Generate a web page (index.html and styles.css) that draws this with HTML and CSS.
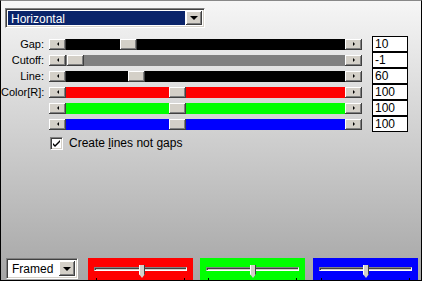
FILE: index.html
```html
<!DOCTYPE html>
<html lang="en">
<head>
    <meta charset="UTF-8">
    <title>Line Effect</title>
    <link rel="stylesheet" href="styles.css">
</head>
<body>
    <div class="window">
        <div class="top">
            <div class="select wide">
                <span class="select-value selected">Horizontal</span>
                <span class="select-btn"><i class="arrow-down"></i></span>
            </div>
        </div>

        <div class="rows">
            <div class="row">
                <span class="label">Gap:</span>
                <div class="slider">
                    <span class="sbtn"><i class="arrow-left"></i></span>
                    <div class="track black"><span class="thumb" style="left: 54px"></span></div>
                    <span class="sbtn"><i class="arrow-right"></i></span>
                </div>
                <span class="value">10</span>
            </div>
            <div class="row">
                <span class="label">Cutoff:</span>
                <div class="slider">
                    <span class="sbtn"><i class="arrow-left"></i></span>
                    <div class="track grey"><span class="thumb" style="left: 1px"></span></div>
                    <span class="sbtn"><i class="arrow-right"></i></span>
                </div>
                <span class="value">-1</span>
            </div>
            <div class="row">
                <span class="label">Line:</span>
                <div class="slider">
                    <span class="sbtn"><i class="arrow-left"></i></span>
                    <div class="track black"><span class="thumb" style="left: 62px"></span></div>
                    <span class="sbtn"><i class="arrow-right"></i></span>
                </div>
                <span class="value">60</span>
            </div>
            <div class="row">
                <span class="label">Color[R]:</span>
                <div class="slider">
                    <span class="sbtn"><i class="arrow-left"></i></span>
                    <div class="track red"><span class="thumb" style="left: 103px"></span></div>
                    <span class="sbtn"><i class="arrow-right"></i></span>
                </div>
                <span class="value">100</span>
            </div>
            <div class="row">
                <span class="label"></span>
                <div class="slider">
                    <span class="sbtn"><i class="arrow-left"></i></span>
                    <div class="track green"><span class="thumb" style="left: 103px"></span></div>
                    <span class="sbtn"><i class="arrow-right"></i></span>
                </div>
                <span class="value">100</span>
            </div>
            <div class="row">
                <span class="label"></span>
                <div class="slider">
                    <span class="sbtn"><i class="arrow-left"></i></span>
                    <div class="track blue"><span class="thumb" style="left: 103px"></span></div>
                    <span class="sbtn"><i class="arrow-right"></i></span>
                </div>
                <span class="value">100</span>
            </div>
        </div>

        <label class="check-row">
            <span class="checkbox">
                <svg width="9" height="9" viewBox="0 0 9 9"><path d="M1 4 L3 6 L8 1 L8 3 L3 8 L1 6 Z" fill="#000"/></svg>
            </span>
            <span>Create <u>l</u>ines not gaps</span>
        </label>

        <div class="bottom">
            <div class="select small">
                <span class="select-value">Framed</span>
                <span class="select-btn"><i class="arrow-down"></i></span>
            </div>
            <div class="panel red">
                <div class="hslider">
                    <span class="hline"></span>
                    <span class="hthumb" style="left: 45px"></span>
                    <span class="tick tick-l"></span>
                    <span class="tick tick-r"></span>
                </div>
            </div>
            <div class="panel green">
                <div class="hslider">
                    <span class="hline"></span>
                    <span class="hthumb" style="left: 44px"></span>
                    <span class="tick tick-l"></span>
                    <span class="tick tick-r"></span>
                </div>
            </div>
            <div class="panel blue">
                <div class="hslider">
                    <span class="hline"></span>
                    <span class="hthumb" style="left: 44px"></span>
                    <span class="tick tick-l"></span>
                    <span class="tick tick-r"></span>
                </div>
            </div>
        </div>
    </div>
</body>
</html>
```

FILE: styles.css
```css
:root {
    --face: #d4d0c8;
    --shadow: #808080;
    --dark: #404040;
}

* {
    margin: 0;
    padding: 0;
    box-sizing: border-box;
    font-family: 'Liberation Sans', Arial, sans-serif;
}

body {
    background: #a8a8a8;
}

.window {
    width: 422px;
    height: 281px;
    border: 1px solid #000;
    border-top-color: #888;
    background: linear-gradient(#f6f6f6, #a6a6a6);
    display: flex;
    flex-direction: column;
    font-size: 11px;
    color: #000;
}

.top {
    padding: 7px 0 0 4px;
}

.select {
    height: 20px;
    display: flex;
    background: #fff;
    border: 1px solid;
    border-color: var(--shadow) #fff #fff var(--shadow);
    box-shadow: inset 1px 1px var(--dark), inset -1px -1px var(--face);
    padding: 2px;
}

.select.wide {
    width: 200px;
}

.select.small {
    width: 72px;
    height: 21px;
}

.select-value {
    flex: 1;
    font-size: 12px;
    line-height: 16px;
    padding-left: 3px;
}

.select-value.selected {
    background: #0a246a;
    color: #fff;
    margin-right: 1px;
}

.select-btn,
.sbtn {
    background: var(--face);
    box-shadow: inset -1px -1px var(--dark), inset 1px 1px #fff, inset -2px -2px var(--shadow);
    display: flex;
    align-items: center;
    justify-content: center;
}

.select-btn {
    width: 16px;
}

.arrow-down {
    border-left: 4px solid transparent;
    border-right: 4px solid transparent;
    border-top: 4px solid #000;
}

.rows {
    margin-top: 8px;
}

.row {
    display: flex;
    align-items: center;
    height: 16px;
}

.label {
    width: 43px;
    text-align: right;
    font-size: 11px;
    line-height: 14px;
    margin-right: 5px;
}

.slider {
    width: 313px;
    height: 11px;
    display: flex;
}

.sbtn {
    width: 17px;
    height: 11px;
}

.arrow-left {
    border-top: 2px solid transparent;
    border-bottom: 2px solid transparent;
    border-right: 2px solid #000;
}

.arrow-right {
    border-top: 2px solid transparent;
    border-bottom: 2px solid transparent;
    border-left: 2px solid #000;
}

.track {
    flex: 1;
    position: relative;
}

.track.black { background: #000; }
.track.grey { background: #808080; }
.track.red { background: #ff0000; }
.track.green { background: #00ff00; }
.track.blue { background: #0000ff; }

.thumb {
    position: absolute;
    top: 0;
    width: 17px;
    height: 11px;
    background: var(--face);
    box-shadow: inset -1px -1px var(--dark), inset 1px 1px #fff, inset -2px -2px var(--shadow);
}

.value {
    width: 36px;
    height: 16px;
    margin-left: 10px;
    background: #fff;
    border: 1px solid #000;
    font-size: 12px;
    line-height: 14px;
    padding-left: 2px;
}

.check-row {
    display: flex;
    align-items: center;
    gap: 6px;
    margin: 4px 0 0 49px;
    font-size: 12px;
}

.checkbox {
    width: 13px;
    height: 13px;
    background: #fff;
    border: 1px solid;
    border-color: var(--shadow) #fff #fff var(--shadow);
    box-shadow: inset 1px 1px var(--dark), inset -1px -1px var(--face);
    display: flex;
    align-items: center;
    justify-content: center;
}

.bottom {
    margin-top: auto;
    display: flex;
    align-items: flex-end;
    padding-left: 5px;
}

.bottom .select {
    margin-bottom: 1px;
    margin-right: 10px;
}

.panel {
    width: 105px;
    height: 22px;
    padding: 6px 0 0 6px;
}

.panel + .panel {
    margin-left: 7px;
}

.panel:last-child {
    margin-left: 8px;
}

.panel.red { background: #ff0000; }
.panel.green { background: #00ff00; }
.panel.blue { background: #0000ff; }

.hslider {
    position: relative;
    width: 93px;
    height: 16px;
}

.hline {
    display: block;
    margin-top: 3px;
    height: 4px;
    border-top: 1px solid var(--shadow);
    border-left: 1px solid var(--shadow);
    border-bottom: 1px solid #fff;
    border-right: 1px solid #fff;
    background: var(--face);
    box-shadow: inset 1px 1px var(--dark);
}

.hthumb {
    position: absolute;
    top: -2px;
    width: 6px;
    height: 13px;
    background: var(--face);
    border-left: 1px solid #fff;
    border-right: 1px solid var(--dark);
    clip-path: polygon(0 0, 100% 0, 100% 70%, 50% 100%, 0 70%);
}

.tick {
    position: absolute;
    top: 11px;
    width: 1px;
    height: 3px;
    background: #000;
}

.tick-l { left: 2px; }
.tick-r { left: 90px; }
```
